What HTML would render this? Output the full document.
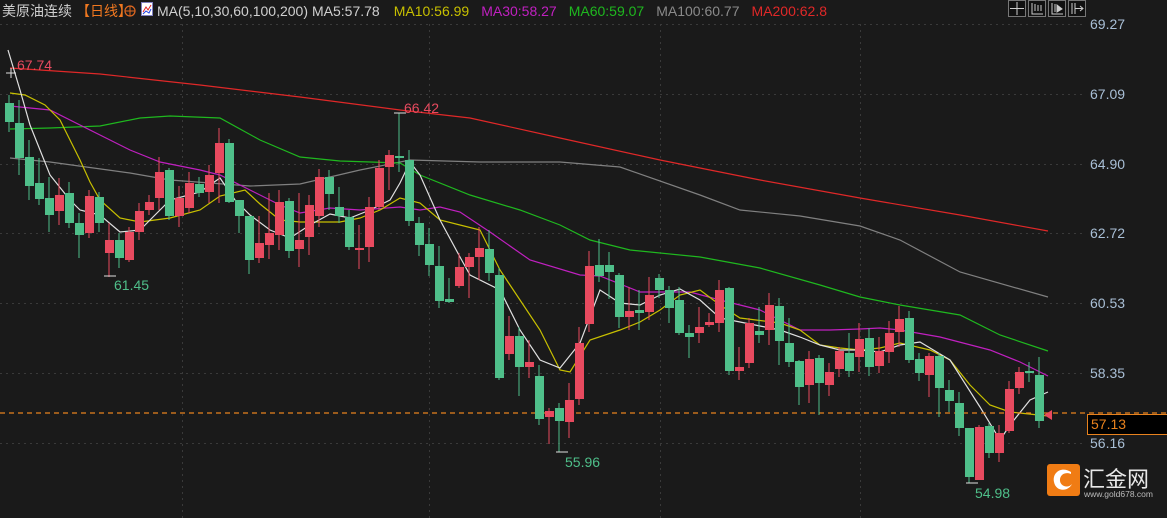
<!DOCTYPE html>
<html><head><meta charset="utf-8"><style>
html,body{margin:0;padding:0;background:#1a1a1a;width:1167px;height:518px;overflow:hidden}
svg{display:block}
text{font-family:"Liberation Sans","Noto Sans CJK SC",sans-serif}
</style></head><body>
<svg width="1167" height="518" viewBox="0 0 1167 518" xmlns="http://www.w3.org/2000/svg">
<rect width="1167" height="518" fill="#1a1a1a"/>
<g stroke="#3a3a3a" stroke-width="1" stroke-dasharray="2,4">
<line x1="0" y1="24.5" x2="1085" y2="24.5"/><line x1="0" y1="94.5" x2="1085" y2="94.5"/><line x1="0" y1="164.5" x2="1085" y2="164.5"/><line x1="0" y1="233.5" x2="1085" y2="233.5"/><line x1="0" y1="303.5" x2="1085" y2="303.5"/><line x1="0" y1="373.5" x2="1085" y2="373.5"/><line x1="0" y1="443.5" x2="1085" y2="443.5"/>
<line x1="182.5" y1="24" x2="182.5" y2="518"/><line x1="429.5" y1="24" x2="429.5" y2="518"/><line x1="660.5" y1="24" x2="660.5" y2="518"/><line x1="860.5" y1="24" x2="860.5" y2="518"/>
</g>
<g fill="none" stroke-width="1.2">
<polyline stroke="#e02828" points="10,68 100,74 200,85 300,97 400,110 470,118 560,138 660,160 760,180 860,198 960,215 1048,231"/>
<polyline stroke="#808080" points="10,158 50,162 130,173 170,180 250,186 300,184 360,170 410,160 480,162 560,162 620,167 700,195 740,210 800,216 860,226 900,240 960,272 1048,297"/>
<polyline stroke="#1fb81f" points="10,129 50,128 100,126 140,118 170,116 220,118 260,140 300,157 340,161 400,163 420,175 470,195 520,210 560,225 590,240 630,250 700,257 760,268 820,285 860,297 900,305 960,315 1000,335 1048,351"/>
<polyline stroke="#c020c0" points="10,106 50,110 80,125 100,135 130,150 160,162 200,170 220,175 240,185 280,205 300,213 330,208 360,210 400,207 420,210 440,207 460,212 490,232 530,260 580,275 600,276 640,292 690,292 720,300 760,310 800,330 830,330 860,329 880,328 900,330 940,337 990,350 1020,362 1048,376"/>
<polyline stroke="#c8c000" points="10,93 25,95 45,105 60,120 80,160 90,182 100,200 120,218 140,222 170,218 200,210 220,196 245,190 260,204 280,220 300,222 340,222 360,218 380,210 400,198 420,203 440,220 460,225 480,230 500,270 520,300 540,330 560,370 570,372 590,340 620,330 640,322 660,310 680,295 700,290 720,305 740,318 780,323 800,330 820,345 840,348 860,350 880,348 900,343 930,350 950,360 970,385 990,405 1010,412 1048,416"/>
<polyline stroke="#e0e0e0" points="8,50 20,90 30,125 50,175 70,200 80,210 100,215 120,232 140,230 155,215 170,200 200,192 220,178 235,200 250,215 270,230 290,238 310,225 330,214 350,218 370,210 390,200 400,183 410,162 420,175 440,220 460,257 470,275 500,290 520,330 540,360 560,368 580,343 600,290 620,303 640,305 660,295 680,289 700,300 720,318 740,322 760,326 780,330 800,337 820,345 840,350 860,350 880,352 900,345 920,342 950,360 980,407 1000,440 1010,425 1030,400 1048,392"/>
</g>
<line x1="0" y1="413" x2="1167" y2="413" stroke="#e8821e" stroke-width="1.3" stroke-dasharray="5,4"/>
<g fill="#4fbf8a" stroke="#4fbf8a" stroke-width="1">
<path d="M9 95V132M19 100V175M29 140V200M39 158V205M49 177V232M69 182V228M79 213V258M99 192V232M119 233V268M169 168V220M199 177V197M229 139V203M239 200V233M249 216V274M289 198V258M329 170V210M339 187V223M349 210V250M399 113V172M409 150V226M419 217V256M429 228V276M439 246V308M449 278V303M489 230V281M499 268V380M519 327V396M539 365V425M559 403V452M599 239V282M609 252V299M619 273V328M639 290V330M659 274V298M669 286V323M679 287V335M689 325V358M729 287V375M759 307V343M779 298V365M789 318V367M799 360V405M819 355V415M849 333V377M869 328V376M909 311V363M919 353V381M939 353V417M949 380V412M959 392V436M969 428V483M989 423V458M1029 362V382M1039 357V428"/>
<g stroke="none">
<rect x="5" y="103" width="9" height="19"/><rect x="15" y="123" width="9" height="35"/><rect x="25" y="157" width="9" height="29"/><rect x="35" y="183" width="9" height="16"/><rect x="45" y="198" width="9" height="17"/><rect x="65" y="193" width="9" height="30"/><rect x="75" y="223" width="9" height="12"/><rect x="95" y="197" width="9" height="26"/><rect x="115" y="240" width="9" height="18"/><rect x="165" y="170" width="9" height="46"/><rect x="195" y="184" width="9" height="9"/><rect x="225" y="143" width="9" height="59"/><rect x="235" y="200" width="9" height="16"/><rect x="245" y="216" width="9" height="44"/><rect x="285" y="201" width="9" height="50"/><rect x="325" y="177" width="9" height="17"/><rect x="335" y="207" width="9" height="9"/><rect x="345" y="217" width="9" height="30"/><rect x="395" y="156" width="9" height="2"/><rect x="405" y="160" width="9" height="61"/><rect x="415" y="223" width="9" height="22"/><rect x="425" y="244" width="9" height="21"/><rect x="435" y="266" width="9" height="35"/><rect x="445" y="299" width="9" height="3"/><rect x="485" y="249" width="9" height="24"/><rect x="495" y="275" width="9" height="103"/><rect x="515" y="336" width="9" height="31"/><rect x="535" y="376" width="9" height="43"/><rect x="555" y="408" width="9" height="13"/><rect x="595" y="265" width="9" height="11"/><rect x="605" y="265" width="9" height="7"/><rect x="615" y="275" width="9" height="42"/><rect x="635" y="310" width="9" height="3"/><rect x="655" y="278" width="9" height="12"/><rect x="665" y="290" width="9" height="18"/><rect x="675" y="300" width="9" height="33"/><rect x="685" y="333" width="9" height="4"/><rect x="725" y="288" width="9" height="83"/><rect x="755" y="331" width="9" height="4"/><rect x="775" y="306" width="9" height="35"/><rect x="785" y="343" width="9" height="19"/><rect x="795" y="361" width="9" height="26"/><rect x="815" y="358" width="9" height="25"/><rect x="845" y="353" width="9" height="18"/><rect x="865" y="338" width="9" height="29"/><rect x="905" y="318" width="9" height="42"/><rect x="915" y="359" width="9" height="14"/><rect x="935" y="356" width="9" height="32"/><rect x="945" y="390" width="9" height="11"/><rect x="955" y="403" width="9" height="25"/><rect x="965" y="428" width="9" height="49"/><rect x="985" y="426" width="9" height="27"/><rect x="1025" y="371" width="9" height="2"/><rect x="1035" y="375" width="9" height="46"/>
</g></g>
<g fill="#e84a5f" stroke="#e84a5f" stroke-width="1">
<path d="M59 178V225M89 190V238M109 223V277M129 227V262M139 203V240M149 195V215M159 157V210M179 186V227M189 172V213M209 165V203M219 128V203M259 216V263M269 193V259M279 190V250M299 193V267M309 195V255M319 169V227M359 225V269M369 197V262M379 160V210M389 150V190M459 253V288M469 253V298M479 227V280M509 316V360M529 340V378M549 408V444M569 383V438M579 327V405M589 251V332M629 287V330M649 277V320M699 307V343M709 313V327M719 280V332M739 347V380M749 318V368M769 293V345M809 351V403M829 363V396M839 347V377M859 323V372M879 337V373M889 321V363M899 306V347M929 353V397M979 425V480M999 425V462M1009 381V433M1019 367V394"/>
<g stroke="none">
<rect x="55" y="195" width="9" height="16"/><rect x="85" y="196" width="9" height="37"/><rect x="105" y="240" width="9" height="13"/><rect x="125" y="232" width="9" height="28"/><rect x="135" y="211" width="9" height="21"/><rect x="145" y="202" width="9" height="8"/><rect x="155" y="172" width="9" height="26"/><rect x="175" y="198" width="9" height="18"/><rect x="185" y="183" width="9" height="25"/><rect x="205" y="175" width="9" height="17"/><rect x="215" y="143" width="9" height="30"/><rect x="255" y="243" width="9" height="15"/><rect x="265" y="233" width="9" height="12"/><rect x="275" y="202" width="9" height="33"/><rect x="295" y="240" width="9" height="9"/><rect x="305" y="205" width="9" height="32"/><rect x="315" y="177" width="9" height="39"/><rect x="355" y="248" width="9" height="2"/><rect x="365" y="207" width="9" height="40"/><rect x="375" y="168" width="9" height="39"/><rect x="385" y="155" width="9" height="12"/><rect x="455" y="267" width="9" height="19"/><rect x="465" y="257" width="9" height="10"/><rect x="475" y="248" width="9" height="9"/><rect x="505" y="336" width="9" height="18"/><rect x="525" y="362" width="9" height="5"/><rect x="545" y="411" width="9" height="6"/><rect x="565" y="400" width="9" height="22"/><rect x="575" y="343" width="9" height="56"/><rect x="585" y="266" width="9" height="58"/><rect x="625" y="311" width="9" height="6"/><rect x="645" y="295" width="9" height="17"/><rect x="695" y="327" width="9" height="6"/><rect x="705" y="322" width="9" height="3"/><rect x="715" y="290" width="9" height="33"/><rect x="735" y="367" width="9" height="4"/><rect x="745" y="323" width="9" height="40"/><rect x="765" y="305" width="9" height="25"/><rect x="805" y="359" width="9" height="26"/><rect x="825" y="372" width="9" height="13"/><rect x="835" y="351" width="9" height="18"/><rect x="855" y="339" width="9" height="18"/><rect x="875" y="351" width="9" height="15"/><rect x="885" y="333" width="9" height="19"/><rect x="895" y="319" width="9" height="13"/><rect x="925" y="356" width="9" height="19"/><rect x="975" y="427" width="9" height="53"/><rect x="995" y="433" width="9" height="20"/><rect x="1005" y="389" width="9" height="42"/><rect x="1015" y="372" width="9" height="16"/>
<path d="M1044 415L1052 410V420Z"/>
</g></g>
<g stroke="#e0e0e0" stroke-width="1">
<path d="M6 73H16M11 68V78M104 276H116M556 452H568M966 483H978M394 113H406"/>
</g>
<text x="17" y="70" fill="#e84a5f" font-size="14">67.74</text>
<text x="404" y="113" fill="#e84a5f" font-size="14">66.42</text>
<text x="114" y="290" fill="#4fbf8a" font-size="14">61.45</text>
<text x="565" y="467" fill="#4fbf8a" font-size="14">55.96</text>
<text x="975" y="498" fill="#4fbf8a" font-size="14">54.98</text>
<g fill="#a9bfd6" font-size="14">
<text x="1090" y="29">69.27</text><text x="1090" y="99">67.09</text><text x="1090" y="169">64.90</text><text x="1090" y="238">62.72</text><text x="1090" y="308">60.53</text><text x="1090" y="378">58.35</text><text x="1090" y="448">56.16</text>
</g>
<rect x="1087.5" y="414.5" width="85" height="20" fill="#000" stroke="#e8821e"/>
<text x="1091" y="429" fill="#e8821e" font-size="14">57.13</text>
<g fill="#111" stroke="#777" stroke-width="1">
<rect x="1008.5" y="0.5" width="17" height="16"/><rect x="1028.5" y="0.5" width="17" height="16"/><rect x="1048.5" y="0.5" width="17" height="16"/><rect x="1068.5" y="0.5" width="17" height="16"/>
</g>
<g stroke="#ccc" stroke-width="1" fill="none">
<path d="M1017 2V15M1010 8.5H1024"/>
<path d="M1032 3V14H1043M1035 4V11M1038 5V11M1041 5V11"/>
<path d="M1052 3V14H1063M1055 4V12"/><path d="M1057 5L1062 9L1057 12Z" fill="#ccc"/>
<path d="M1072 3V14M1075 3V14M1075 8.5H1083M1080 6L1083 8.5L1080 11"/>
</g>
<text x="2" y="16" fill="#cfcfcf" font-size="14">美原油连续</text>
<text x="76" y="16" fill="#f07820" font-size="14">【日线】</text>
<circle cx="130" cy="11" r="5" fill="none" stroke="#e06820" stroke-width="1.2"/>
<path d="M125 11H135M130 6V16" stroke="#e06820" stroke-width="1"/>
<rect x="141.5" y="2.5" width="11" height="13" fill="#fff" stroke="#8080c0"/>
<path d="M143 12L146 7L148 10L151 5" stroke="#e02020" fill="none"/><path d="M143 14L146 11L149 13L151 9" stroke="#2040e0" fill="none"/>
<text x="157" y="16" font-size="14"><tspan fill="#d0d0d0">MA(5,10,30,60,100,200)</tspan><tspan fill="#d0d0d0" dx="4">MA5:57.78</tspan><tspan fill="#c8c000" dx="14">MA10:56.99</tspan><tspan fill="#c020c0" dx="12">MA30:58.27</tspan><tspan fill="#1fb81f" dx="12">MA60:59.07</tspan><tspan fill="#8a8a8a" dx="12">MA100:60.77</tspan><tspan fill="#e02828" dx="12">MA200:62.8</tspan></text>
<rect x="1047" y="464" width="33" height="32" rx="3" fill="#f07c14"/>
<path d="M1071 472C1062 466 1052 472 1054 482C1056 492 1068 492 1072 484C1068 489 1059 486 1060 479C1061 473 1067 472 1071 474Z" fill="#fff"/>
<text x="1083" y="487" fill="#e8e8e8" font-size="22">汇金网</text>
<text x="1084" y="497" fill="#bbb" font-size="8.5">www.gold678.com</text>
</svg>
</body></html>
